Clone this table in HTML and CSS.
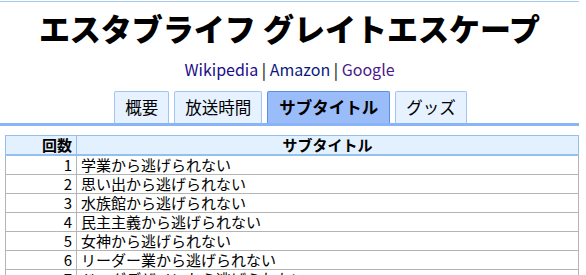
FILE: index.html
```html
<!DOCTYPE html>
<html lang="ja">
<head>
<meta charset="utf-8">
<link rel="stylesheet" href="styles.css">
</head>
<body>
<div class="page">
  <h1 class="title">エスタブライフ グレイトエスケープ</h1>
  <p class="links"><a class="l1" href="#">Wikipedia</a> | <a class="l2" href="#">Amazon</a> | <a class="l3" href="#">Google</a></p>
  <nav class="tabs">
    <a class="tab" href="#">概要</a>
    <a class="tab" href="#">放送時間</a>
    <a class="tab active" href="#">サブタイトル</a>
    <a class="tab" href="#">グッズ</a>
  </nav>
  <table class="list">
    <thead>
      <tr><th class="num">回数</th><th class="sub">サブタイトル</th></tr>
    </thead>
    <tbody>
      <tr><td class="num">1</td><td>学業から逃げられない</td></tr>
      <tr><td class="num">2</td><td>思い出から逃げられない</td></tr>
      <tr><td class="num">3</td><td>水族館から逃げられない</td></tr>
      <tr><td class="num">4</td><td>民主主義から逃げられない</td></tr>
      <tr><td class="num">5</td><td>女神から逃げられない</td></tr>
      <tr><td class="num">6</td><td>リーダー業から逃げられない</td></tr>
      <tr><td class="num">7</td><td>ドッグデザインから逃げられない</td></tr>
    </tbody>
  </table>
</div>
</body>
</html>
```
FILE: styles.css
```css
html, body {
  margin: 0;
  padding: 0;
  background: #fff;
}
body {
  font-family: "Noto Sans CJK JP", "Noto Sans", sans-serif;
  color: #000;
  overflow: hidden;
}
.page {
  width: 579px;
  margin-top: 1px;
  border-top: 1px solid #a9c8ee;
}
.title {
  margin: 7px 0 0;
  text-align: center;
  font-size: 31px;
  line-height: 38px;
  font-weight: 900;
  letter-spacing: 0;
}
.links {
  margin: 11px 0 0;
  text-align: center;
  font-size: 16px;
  line-height: 22px;
}
.links a { text-decoration: none; }
.l1 { color: #1c0d8a; }
.l2 { color: #0a1a7a; }
.l3 { color: #4a1a8b; }
.tabs {
  display: flex;
  justify-content: center;
  gap: 5px;
  margin-top: 11px;
  border-bottom: 3px solid #8ab4f8;
  padding-left: 2px;
}
.tab {
  display: block;
  padding: 0 10px;
  height: 31px;
  line-height: 31px;
  font-size: 16.5px;
  color: #000;
  text-decoration: none;
  background: #e6f2ff;
  border: 1px solid #a2c4f0;
  border-bottom: none;
  border-radius: 2px 2px 0 0;
}
.tab.active {
  background: #9abcf8;
  border-color: #5d8fe8;
  font-weight: bold;
  padding: 0 11px;
}
.list {
  margin: 9px 0 0 5px;
  width: 574px;
  border-collapse: collapse;
  font-size: 15px;
}
.list th {
  background: #e3f1ff;
  border: 1px solid #94c0ee;
  border-bottom: 2px solid #94c0ee;
  height: 18px;
  line-height: 18px;
  padding: 0 4px;
  font-weight: bold;
}
.list th.num {
  width: 62px;
  text-align: right;
}
.list th.sub { text-align: center; }
.list td {
  border: 1px solid #b4b4b4;
  height: 18px;
  line-height: 18px;
  padding: 0 4px;
}
.list td.num { text-align: right; }
```
